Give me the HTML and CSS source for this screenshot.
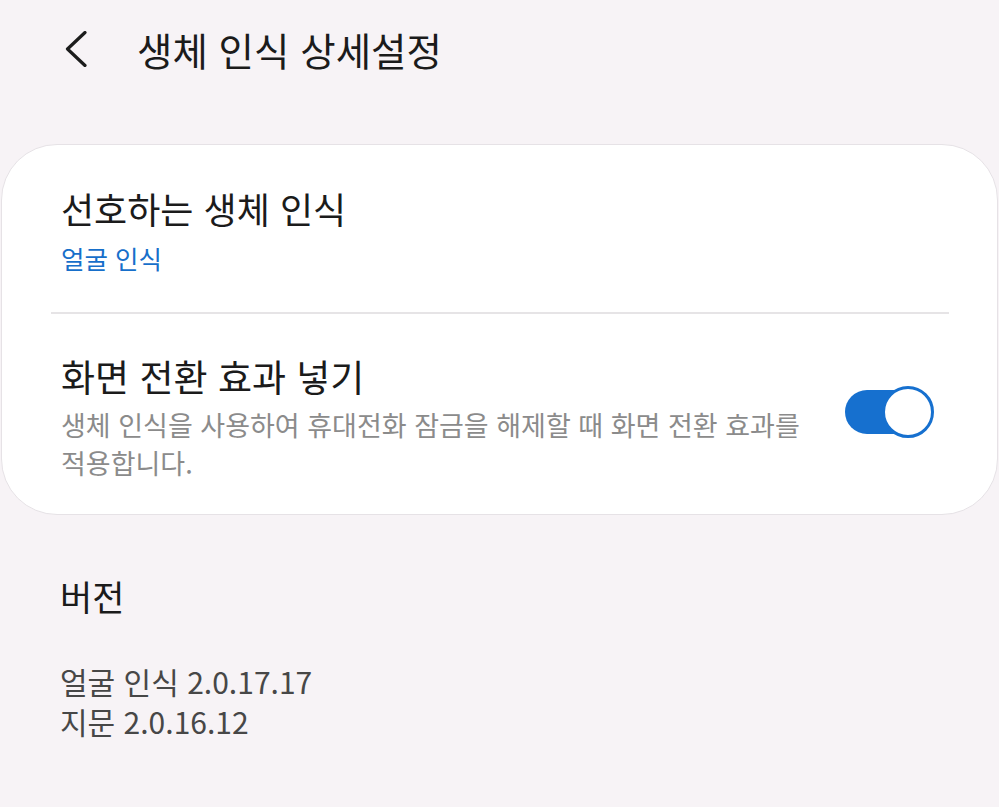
FILE: index.html
```html
<!DOCTYPE html>
<html lang="ko">
<head>
    <meta charset="UTF-8">
    <meta name="viewport" content="width=device-width, initial-scale=1.0">
    <title>생체 인식 상세설정</title>
    <link rel="stylesheet" href="styles.css">
</head>
<body>
    <header class="top-bar">
        <button class="back" aria-label="뒤로">
            <svg width="24" height="36" viewBox="0 0 24 36">
                <polyline points="21,1.5 3.5,18 21,34.5" fill="none" stroke="#1c1c1c" stroke-width="3.2" stroke-linecap="round" stroke-linejoin="round"/>
            </svg>
        </button>
        <h1>생체 인식 상세설정</h1>
    </header>

    <main>
        <section class="card">
            <div class="item item-first">
                <div class="item-title">선호하는 생체 인식</div>
                <div class="item-value">얼굴 인식</div>
            </div>

            <div class="divider"></div>

            <div class="item item-switch">
                <div class="item-text">
                    <div class="item-title">화면 전환 효과 넣기</div>
                    <div class="item-desc">생체 인식을 사용하여 휴대전화 잠금을 해제할 때 화면 전환 효과를 적용합니다.</div>
                </div>
                <div class="switch on">
                    <span class="track"></span>
                    <span class="thumb"></span>
                </div>
            </div>
        </section>

        <section class="version">
            <h2>버전</h2>
            <p>얼굴 인식 2.0.17.17<br>지문 2.0.16.12</p>
        </section>
    </main>
</body>
</html>
```

FILE: styles.css
```css
body {
    margin: 0;
    padding: 0;
    background-color: #f7f3f6;
    font-family: "Noto Sans CJK KR", "Noto Sans", sans-serif;
    color: #1b1b1b;
    word-break: keep-all;
}

/* 상단 바 */
.top-bar {
    display: flex;
    align-items: center;
    height: 98px;
    padding-left: 64px;
}
.back {
    display: flex;
    padding: 0;
    border: 0;
    background: none;
    margin-right: 49px;
}
.top-bar h1 {
    margin: 0;
    font-size: 38.5px;
    font-weight: 400;
    line-height: 96px;
}

/* 카드 */
.card {
    margin: 46px 1px 0;
    background: #ffffff;
    border: 1px solid #e6e2e6;
    border-radius: 56px;
}
.item {
    padding: 0 63px 0 59px;
}
.item-first {
    padding-top: 41px;
    padding-bottom: 36px;
}
.item-title {
    font-size: 36px;
    line-height: 44px;
}
.item-switch .item-title {
    font-size: 37px;
}
.item-value {
    margin-top: 10px;
    font-size: 25.5px;
    line-height: 36px;
    color: #176fca;
}
.divider {
    height: 2px;
    margin: 0 48px 0 49px;
    background: #e6e4e6;
}

.item-switch {
    display: flex;
    align-items: center;
    justify-content: space-between;
    padding-top: 40px;
    padding-bottom: 32px;
}
.item-text {
    width: 770px;
}
.item-desc {
    margin-top: 8px;
    font-size: 27px;
    line-height: 38px;
    color: #8b8b8b;
}

/* 스위치 */
.switch {
    position: relative;
    width: 89px;
    height: 53px;
    margin-bottom: 12px;
}
.switch .track {
    position: absolute;
    left: 0;
    top: 4px;
    width: 80px;
    height: 44px;
    border-radius: 22px;
    background: #1670cf;
}
.switch .thumb {
    position: absolute;
    right: 0;
    top: 0;
    width: 46px;
    height: 46px;
    border: 3.5px solid #1670cf;
    border-radius: 50%;
    background: #ffffff;
}

/* 버전 */
.version {
    padding-left: 60px;
}
.version h2 {
    margin: 59px 0 0;
    font-size: 35px;
    font-weight: 400;
    line-height: 44px;
}
.version p {
    margin: 43px 0 0;
    font-size: 30px;
    line-height: 40px;
    color: #474747;
}
```
